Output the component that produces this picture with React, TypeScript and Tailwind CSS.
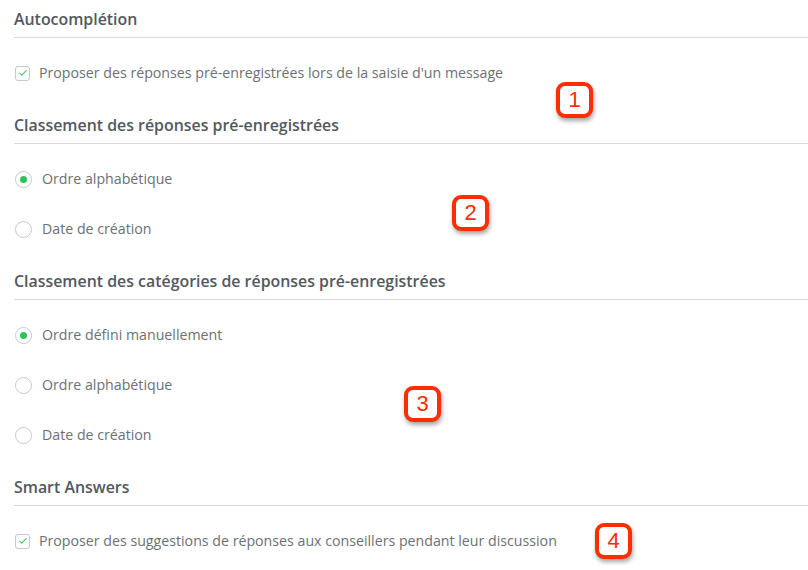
import { Check } from 'lucide-react'

type Option = { label: string; checked?: boolean }

type Section = {
  title: string
  kind: 'checkbox' | 'radio'
  options: Option[]
}

const sections: Section[] = [
  {
    title: 'Autocomplétion',
    kind: 'checkbox',
    options: [{ label: "Proposer des réponses pré-enregistrées lors de la saisie d'un message", checked: true }],
  },
  {
    title: 'Classement des réponses pré-enregistrées',
    kind: 'radio',
    options: [{ label: 'Ordre alphabétique', checked: true }, { label: 'Date de création' }],
  },
  {
    title: 'Classement des catégories de réponses pré-enregistrées',
    kind: 'radio',
    options: [
      { label: 'Ordre défini manuellement', checked: true },
      { label: 'Ordre alphabétique' },
      { label: 'Date de création' },
    ],
  },
  {
    title: 'Smart Answers',
    kind: 'checkbox',
    options: [{ label: 'Proposer des suggestions de réponses aux conseillers pendant leur discussion', checked: true }],
  },
]

const badges = [
  { n: 1, cls: 'left-[556px] top-[82px]' },
  { n: 2, cls: 'left-[452px] top-[195px]' },
  { n: 3, cls: 'left-[404px] top-[386px]' },
  { n: 4, cls: 'left-[595px] top-[523px]' },
]

function CheckBox({ checked }: { checked?: boolean }) {
  return (
    <span className="ml-[1px] flex h-[15px] w-[15px] items-center justify-center rounded-[3px] border border-[#c8c9cc] bg-white">
      {checked && <Check className="h-[10px] w-[10px] text-[#2ec35a]" strokeWidth={2.5} />}
    </span>
  )
}

function Radio({ checked }: { checked?: boolean }) {
  return (
    <span className="ml-[1px] flex h-[17px] w-[17px] items-center justify-center rounded-full border border-[#c8c9cc] bg-white">
      {checked && <span className="h-[7px] w-[7px] rounded-full bg-[#2ec35a]" />}
    </span>
  )
}

export default function App() {
  return (
    <div className="relative h-[570px] w-[808px] overflow-hidden bg-white font-['Open_Sans',sans-serif]">
      <div className="pl-[14px]">
        {sections.map((s, i) => (
          <div key={i} className={i === 0 ? 'pt-[9px]' : 'pt-[17px]'}>
            <div className="border-b border-[#d9d9db] pb-[8px] text-[15.9px] leading-[20px] font-semibold text-[#53585e]">
              {s.title}
            </div>
            <div className="mt-[10px]">
              {s.options.map((o, j) => (
                <div key={j} className="flex h-[50px] items-center">
                  {s.kind === 'checkbox' ? <CheckBox checked={o.checked} /> : <Radio checked={o.checked} />}
                  <span
                    className={`text-[14.2px] leading-[18px] text-[#6c7075] ${s.kind === 'checkbox' ? 'ml-[9px]' : 'ml-[10px]'}`}
                  >
                    {o.label}
                  </span>
                </div>
              ))}
            </div>
          </div>
        ))}
      </div>

      {badges.map((b) => (
        <div
          key={b.n}
          className={`absolute ${b.cls} flex h-[36px] w-[37px] items-center justify-center rounded-[9px] border-[4px] border-[#ff2d00] bg-white text-[22px] leading-none text-[#ff2d00] shadow-[1px_3px_4px_rgba(0,0,0,0.35)] font-['Liberation_Sans',sans-serif]`}
        >
          {b.n}
        </div>
      ))}
    </div>
  )
}
